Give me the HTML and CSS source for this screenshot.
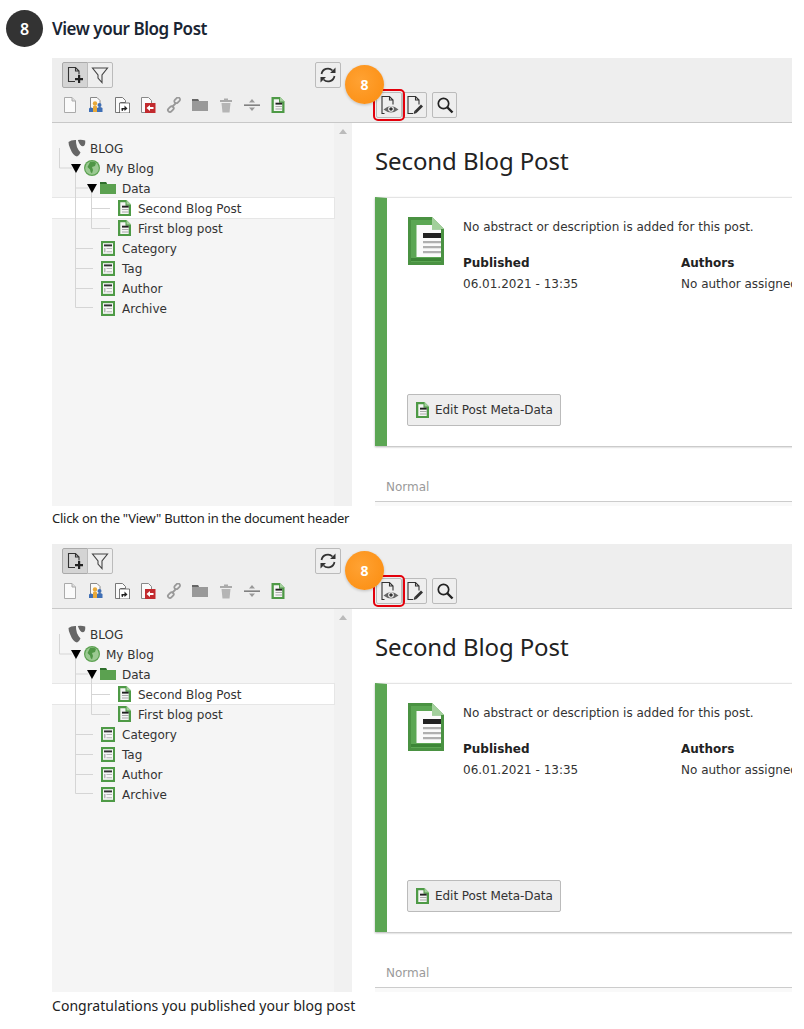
FILE: index.html
```html
<!DOCTYPE html>
<html lang="en">
<head>
<meta charset="utf-8">
<title>View your Blog Post</title>
<link rel="stylesheet" href="styles.css">
</head>
<body>
<svg class="defs" width="0" height="0" aria-hidden="true">
  <symbol id="i-new" viewBox="0 0 16 16"><path d="M2.500.5h7.500l3.500 3.500v11.500H2.500z" fill="#fafafa" stroke="#aaa"/><path d="M10 .5V4h3.500" fill="#ddd" stroke="#aaa"/></symbol>
  <symbol id="i-users" viewBox="0 0 16 16"><path d="M2.500.5h6.500l3 3v8H2.500z" fill="#fafafa" stroke="#888"/><path d="M1 15v-3.500q2-2 4 0V15z" fill="#3f6fb5"/><path d="M5 15V9.500q2-2 4 0V15z" fill="#e8a93a"/><path d="M9 15v-4q2.500-2 5.500 0v4z" fill="#3f6fb5"/><circle cx="7" cy="6.500" r="2.200" fill="#e8a93a"/><circle cx="11.500" cy="8" r="2" fill="#3f6fb5"/></symbol>
  <symbol id="i-move" viewBox="0 0 16 16"><path d="M1.500.5h7l3 3v2h-5v10h-5z" fill="#fafafa" stroke="#777"/><path d="M5.500 6h10v10h-10z" fill="#fff" stroke="#444" stroke-width=".7"/><path d="M7.500 13.500V11h3V8.500l3 3-3 2.500v-1.500H9v1.500z" fill="#222"/></symbol>
  <symbol id="i-del" viewBox="0 0 16 16"><path d="M1.500.5h7l3 3v12h-10z" fill="#fafafa" stroke="#888"/><path d="M5 6h10.500v10H5z" fill="#c22a2e"/><path d="M6.500 11l3.500-3v2h3.500v2H10v2z" fill="#fff"/></symbol>
  <symbol id="i-link" viewBox="0 0 16 16"><g fill="none" stroke="#999" stroke-width="1.800"><rect x="8" y="1.500" width="6.500" height="4" rx="2" transform="rotate(-45 11 3.500)"/><rect x="1.500" y="10" width="6.500" height="4" rx="2" transform="rotate(-45 5 12)"/><path d="M6 10l4-4"/></g></symbol>
  <symbol id="i-folder" viewBox="0 0 16 16"><path d="M0 2h6l1 2h9v10H0z" fill="#999"/><path d="M0 2h6l1 2H0z" fill="#666"/></symbol>
  <symbol id="i-trash" viewBox="0 0 16 16"><path d="M2 3h12v2H2zM6 1.500h4V3H6z" fill="#aaa"/><path d="M3.500 6h9l-1 9.500h-7z" fill="#b5b5b5"/></symbol>
  <symbol id="i-split" viewBox="0 0 16 16"><path d="M0 7.500h16v1.300H0z" fill="#666"/><path d="M8 2l3 3.500H5zM8 14l-3-3.500h6z" fill="#999"/></symbol>
  <symbol id="i-page" viewBox="0 0 13 16"><path d="M0 0h8.500L13 4.500V16H0z" fill="#4e9a46"/><path d="M8.500 0L13 4.500H8.500z" fill="#a3d09c"/><path d="M2.300 2.300h5.200v3.400h3.200V14H2.300z" fill="#f5f5f5"/><path d="M4 5.700h6.700v1.900H4z" fill="#222"/><path d="M4 9h6.700v1.100H4zM4 11.400h6.700v1.100H4z" fill="#aaa"/></symbol>
  <symbol id="i-table" viewBox="0 0 14 14" preserveAspectRatio="none"><path d="M0 0h14v14H0z" fill="#4e9a46"/><path d="M2 2h10v10H2z" fill="#f6f6f6"/><path d="M3 3.200h8v1.800H3z" fill="#333"/><path d="M3 6.500h1.500v4H3zM5.500 6.500H11v1H5.500zM5.500 9.500H11v1H5.500z" fill="#b5b5b5"/></symbol>
  <symbol id="i-new-plus" viewBox="0 0 18 18"><path d="M9 15.500H2.500v-14h7l3.500 3.500v3.500M9.500 1.500V5H13" fill="none" stroke="#333" stroke-width="1.100"/><path d="M12 9h2.200v3H17v2.200h-2.800V17H12v-2.800H9V12h3z" fill="#222"/></symbol>
  <symbol id="i-filter" viewBox="0 0 18 18"><path d="M1.500 2h15l-5.500 7v7.500L7 12V9z" fill="none" stroke="#444" stroke-width="1.100"/></symbol>
  <symbol id="i-refresh" viewBox="0 0 18 18"><path d="M2.500 8a6.500 6.500 0 0 1 11-3.500M15.500 10a6.500 6.500 0 0 1-11 3.500" fill="none" stroke="#333" stroke-width="1.700"/><path d="M16.500 1.500v5.500H11zM1.500 16.500V11H7z" fill="#333"/></symbol>
  <symbol id="i-view" viewBox="0 0 20 20"><path d="M5.500 18.500H3V1.500h7.500l3.500 3.500v4.500M10.500 1.500V5H14" fill="none" stroke="#333" stroke-width="1.100"/><path d="M4.500 14.500q7.500-7 15 0q-7.500 6-15 0z" fill="#666"/><circle cx="12" cy="14" r="2.800" fill="#fff"/><circle cx="12" cy="14" r="1.800" fill="#333"/></symbol>
  <symbol id="i-edit" viewBox="0 0 20 20"><path d="M8 18.500H3V1.500h7.500l3.500 3.500v4.500M10.500 1.500V5H14" fill="none" stroke="#333" stroke-width="1.100"/><path d="M10.500 17l6.500-6.500" fill="none" stroke="#333" stroke-width="2.800"/><path d="M8.500 19l1-3.200 2.200 2.200z" fill="#333"/></symbol>
  <symbol id="i-search" viewBox="0 0 18 18"><circle cx="7.500" cy="7.500" r="5.200" fill="none" stroke="#222" stroke-width="1.700"/><path d="M11 11l5.500 5.500" stroke="#222" stroke-width="2.400"/></symbol>
  <symbol id="i-typo3" viewBox="0 0 18 18"><path d="M.5 3Q3 .8 8 1q-.5 7 4.500 12.500Q11 17 9 17.500 5 17 2 9 .4 5 .5 3zM9.800.9q4-.6 7.400.6.500 5-2.200 5.800Q12 7 9.800.9z" fill="#666"/></symbol>
  <symbol id="i-globe" viewBox="0 0 16 16"><circle cx="8" cy="8" r="8" fill="#5ba150"/><circle cx="8" cy="8" r="6.800" fill="#9bc992"/><path d="M6 2q4-1 6 1l-1 3-3 1 1 3-1 3.500q-2-2-2-4L3.500 7z" fill="#4f9646"/></symbol>
  <symbol id="i-data" viewBox="0 0 16 14"><path d="M0 1h6l1 2h9v10H0z" fill="#5ba150"/><path d="M0 1h6l1 2H0z" fill="#2f6f2c"/></symbol>
  <symbol id="i-big" viewBox="0 0 36 48"><path d="M0 0h24l12 12v36H0z" fill="#4a9242"/><path d="M3 3h21v9h9v33H3z" fill="#5ba653"/><path d="M24 0l12 12H24z" fill="#a3d09c"/><path d="M8.500 8H24v4.500h9V40H8.500z" fill="#fbfbfb"/><path d="M15 16h18v5H15z" fill="#222"/><path d="M15 24h18v2.200H15zM15 29h18v2.200H15zM15 34h18v2.200H15z" fill="#b0b0b0"/><path d="M3 41h30v3H3z" fill="#3c8536"/></symbol>
</svg>

<main class="page">
  <h2 class="step"><span class="step-num">8</span><span>View your Blog Post</span></h2>

  <section class="shot">
    <div class="toolbar">
      <div class="tool-left">
        <div class="tool-top">
          <div class="btn-group">
            <span class="btn active"><svg class="ic18"><use href="#i-new-plus"/></svg></span>
            <span class="btn"><svg class="ic18"><use href="#i-filter"/></svg></span>
          </div>
          <span class="btn"><svg class="ic18"><use href="#i-refresh"/></svg></span>
        </div>
        <div class="tool-icons">
          <svg class="ic16"><use href="#i-new"/></svg><svg class="ic16"><use href="#i-users"/></svg><svg class="ic16"><use href="#i-move"/></svg><svg class="ic16"><use href="#i-del"/></svg><svg class="ic16"><use href="#i-link"/></svg><svg class="ic16"><use href="#i-folder"/></svg><svg class="ic16"><use href="#i-trash"/></svg><svg class="ic16"><use href="#i-split"/></svg><svg class="ic16"><use href="#i-page"/></svg>
        </div>
      </div>
      <div class="tool-right">
        <span class="btn hl"><svg class="ic20"><use href="#i-view"/></svg></span>
        <span class="btn"><svg class="ic20"><use href="#i-edit"/></svg></span>
        <span class="btn search"><svg class="ic18"><use href="#i-search"/></svg></span>
      </div>
      <span class="badge">8</span>
    </div>
    <div class="panes">
      <aside class="tree">
        <svg class="tree-lines" width="100" height="190" aria-hidden="true"><path d="M7.500 25v20H20M23.500 45v139.500M23.500 65H36M39.500 65v40.500M39.500 85.500H58M39.500 105.500H58M23.500 125.500H41M23.500 145.500H41M23.500 165.500H41M23.500 184.500H41" fill="none" stroke="#d5d5d5"/></svg>
        <div class="row lv0"><svg class="t-ic"><use href="#i-typo3"/></svg>BLOG</div>
        <div class="row lv1"><i class="caret"></i><svg class="t-ic"><use href="#i-globe"/></svg>My Blog</div>
        <div class="row lv2"><i class="caret"></i><svg class="t-ic"><use href="#i-data"/></svg>Data</div>
        <div class="row lv3 selected"><svg class="t-ic"><use href="#i-page"/></svg>Second Blog Post</div>
        <div class="row lv3"><svg class="t-ic"><use href="#i-page"/></svg>First blog post</div>
        <div class="row lv4"><svg class="t-ic"><use href="#i-table"/></svg>Category</div>
        <div class="row lv4"><svg class="t-ic"><use href="#i-table"/></svg>Tag</div>
        <div class="row lv4"><svg class="t-ic"><use href="#i-table"/></svg>Author</div>
        <div class="row lv4"><svg class="t-ic"><use href="#i-table"/></svg>Archive</div>
      </aside>
      <div class="scroll"><i class="scroll-up"></i></div>
      <div class="content">
        <h1 class="title">Second Blog Post</h1>
        <div class="card">
          <div class="card-top">
            <svg class="big"><use href="#i-big"/></svg>
            <div class="card-text">
              <p class="abstract">No abstract or description is added for this post.</p>
              <div class="meta">
                <div class="meta-col"><b>Published</b><span>06.01.2021 - 13:35</span></div>
                <div class="meta-col"><b>Authors</b><span>No author assigned</span></div>
              </div>
            </div>
          </div>
          <span class="edit"><svg class="ic-edit"><use href="#i-page"/></svg>Edit Post Meta-Data</span>
        </div>
        <div class="normal">Normal</div>
        <div class="foot"></div>
      </div>
    </div>
  </section>
  <p class="caption">Click on the "View" Button in the document header</p>

  <section class="shot">
    <div class="toolbar">
      <div class="tool-left">
        <div class="tool-top">
          <div class="btn-group">
            <span class="btn active"><svg class="ic18"><use href="#i-new-plus"/></svg></span>
            <span class="btn"><svg class="ic18"><use href="#i-filter"/></svg></span>
          </div>
          <span class="btn"><svg class="ic18"><use href="#i-refresh"/></svg></span>
        </div>
        <div class="tool-icons">
          <svg class="ic16"><use href="#i-new"/></svg><svg class="ic16"><use href="#i-users"/></svg><svg class="ic16"><use href="#i-move"/></svg><svg class="ic16"><use href="#i-del"/></svg><svg class="ic16"><use href="#i-link"/></svg><svg class="ic16"><use href="#i-folder"/></svg><svg class="ic16"><use href="#i-trash"/></svg><svg class="ic16"><use href="#i-split"/></svg><svg class="ic16"><use href="#i-page"/></svg>
        </div>
      </div>
      <div class="tool-right">
        <span class="btn hl"><svg class="ic20"><use href="#i-view"/></svg></span>
        <span class="btn"><svg class="ic20"><use href="#i-edit"/></svg></span>
        <span class="btn search"><svg class="ic18"><use href="#i-search"/></svg></span>
      </div>
      <span class="badge">8</span>
    </div>
    <div class="panes">
      <aside class="tree">
        <svg class="tree-lines" width="100" height="190" aria-hidden="true"><path d="M7.500 25v20H20M23.500 45v139.500M23.500 65H36M39.500 65v40.500M39.500 85.500H58M39.500 105.500H58M23.500 125.500H41M23.500 145.500H41M23.500 165.500H41M23.500 184.500H41" fill="none" stroke="#d5d5d5"/></svg>
        <div class="row lv0"><svg class="t-ic"><use href="#i-typo3"/></svg>BLOG</div>
        <div class="row lv1"><i class="caret"></i><svg class="t-ic"><use href="#i-globe"/></svg>My Blog</div>
        <div class="row lv2"><i class="caret"></i><svg class="t-ic"><use href="#i-data"/></svg>Data</div>
        <div class="row lv3 selected"><svg class="t-ic"><use href="#i-page"/></svg>Second Blog Post</div>
        <div class="row lv3"><svg class="t-ic"><use href="#i-page"/></svg>First blog post</div>
        <div class="row lv4"><svg class="t-ic"><use href="#i-table"/></svg>Category</div>
        <div class="row lv4"><svg class="t-ic"><use href="#i-table"/></svg>Tag</div>
        <div class="row lv4"><svg class="t-ic"><use href="#i-table"/></svg>Author</div>
        <div class="row lv4"><svg class="t-ic"><use href="#i-table"/></svg>Archive</div>
      </aside>
      <div class="scroll"><i class="scroll-up"></i></div>
      <div class="content">
        <h1 class="title">Second Blog Post</h1>
        <div class="card">
          <div class="card-top">
            <svg class="big"><use href="#i-big"/></svg>
            <div class="card-text">
              <p class="abstract">No abstract or description is added for this post.</p>
              <div class="meta">
                <div class="meta-col"><b>Published</b><span>06.01.2021 - 13:35</span></div>
                <div class="meta-col"><b>Authors</b><span>No author assigned</span></div>
              </div>
            </div>
          </div>
          <span class="edit"><svg class="ic-edit"><use href="#i-page"/></svg>Edit Post Meta-Data</span>
        </div>
        <div class="normal">Normal</div>
        <div class="foot"></div>
      </div>
    </div>
  </section>
  <p class="caption big-caption">Congratulations you published your blog post</p>
</main>
</body>
</html>
```
FILE: styles.css
```css
* { box-sizing: border-box; }
html, body { margin: 0; padding: 0; background: #fff; }
body { font-family: "Noto Sans", "Open Sans", sans-serif; color: #212529; overflow: hidden; }
.defs { position: absolute; }
.page { width: 792px; padding: 10px 0 0 6px; }

.step { display: flex; align-items: center; gap: 9px; margin: 0 0 11px; height: 37px; font-size: 17px; font-weight: 600; color: #1a2533; letter-spacing: -0.47px; }
.step-num { width: 37px; height: 37px; border-radius: 50%; background: #333; color: #fff; display: flex; align-items: center; justify-content: center; font-size: 16px; letter-spacing: 0; }

.shot { margin-left: 46px; width: 740px; height: 448px; overflow: hidden; position: relative; font-family: "DejaVu Sans", Verdana, sans-serif; font-size: 12px; color: #333; }
.toolbar { height: 65px; background: #eee; border-bottom: 1px solid #c8c8c8; display: flex; position: relative; }
.tool-left { width: 289px; padding: 4px 0 0 10px; }
.tool-top { display: flex; justify-content: space-between; }
.btn-group { display: flex; }
.btn { width: 26px; height: 26px; background: #eee; border: 1px solid #bbb; border-radius: 2px; display: flex; align-items: center; justify-content: center; }
.btn.active { background: #d4d4d4; border-color: #aaa; border-radius: 2px 0 0 2px; }
.btn-group .btn + .btn { margin-left: -1px; border-radius: 0 2px 2px 0; }
.ic18 { width: 18px; height: 18px; display: block; }
.ic20 { width: 20px; height: 20px; display: block; }
.ic16 { width: 16px; height: 16px; display: block; flex: none; }
.ic-edit { width: 13px; height: 16px; display: block; flex: none; }
.tool-icons { display: flex; gap: 10px; margin: 9px 0 0 0; }
.tool-right { display: flex; margin-left: 35px; padding-top: 34px; }
.tool-right .btn { width: 25px; }
.tool-right .btn.hl { width: 26px; outline: 2px solid #e3000b; outline-offset: 1px; border-radius: 2px; position: relative; z-index: 1; }
.tool-right .btn.search { margin-left: 5px; width: 25px; }
.badge { position: absolute; left: 293px; top: 7px; width: 39px; height: 39px; border-radius: 50%; background: radial-gradient(circle at 40% 40%, #ffa233, #fb8c0e); color: #fff; font-family: "Noto Sans", sans-serif; font-weight: 700; font-size: 14px; display: flex; align-items: center; justify-content: center; box-shadow: 0 1px 3px rgba(0,0,0,.2); z-index: 2; }

.panes { display: flex; height: 383px; }
.tree { width: 282px; background: #f5f5f5; padding-top: 15px; position: relative; }
.tree-lines { position: absolute; left: 0; top: 0; z-index: 1; }
.row { height: 20px; display: flex; align-items: center; position: relative; white-space: nowrap; padding-top: 2px; }
.t-ic { width: 16px; height: 16px; margin: -2px 6px 0 0; flex: none; position: relative; z-index: 2; }
.lv0 { padding-left: 16px; }
.lv0 .t-ic { width: 18px; height: 18px; margin-right: 4px; }
.lv1 { padding-left: 32px; }
.lv2 { padding-left: 48px; }
.lv3 { padding-left: 66px; }
.lv3 .t-ic { width: 13px; margin-right: 7px; }
.lv4 { padding-left: 49px; }
.lv4 .t-ic { width: 14px; height: 15px; margin-right: 7px; }
.selected { background: #fff; box-shadow: 0 0 0 1px #e6e6e6; }
.caret { width: 0; height: 0; border-left: 5px solid transparent; border-right: 5px solid transparent; border-top: 9px solid #000; flex: none; margin: -2px 3px 0 -13px; position: relative; z-index: 2; }
.scroll { width: 18px; background: #f1f1f1; display: flex; justify-content: center; padding-top: 6px; }
.scroll-up { width: 0; height: 0; border-left: 4px solid transparent; border-right: 4px solid transparent; border-bottom: 5px solid #bbb; }
.content { flex: 1; background: #fff; padding-left: 23px; min-width: 0; }
.title { font-family: "Noto Sans", sans-serif; font-weight: 400; font-size: 24px; line-height: 32px; margin: 22px 0 20px; color: #222; letter-spacing: -0.1px; }
.card { height: 249px; border-left: 12px solid #5ba653; box-shadow: 0 1px 2px rgba(0,0,0,.3); border-top: 1px solid #e4e4e4; margin-right: -60px; padding: 19px 0 0 21px; position: relative; }
.card-top { display: flex; }
.big { width: 36px; height: 48px; margin-right: 19px; flex: none; }
.abstract { margin: 0 0 18px; line-height: 20px; white-space: nowrap; }
.meta { display: flex; }
.meta-col { width: 218px; display: flex; flex-direction: column; gap: 5px; line-height: 16px; white-space: nowrap; }
.meta-col b { font-weight: 700; color: #222; }
.edit { position: absolute; left: 20px; top: 196px; height: 32px; width: 154px; background: #eee; border: 1px solid #bbb; border-radius: 2px; display: flex; align-items: center; gap: 6px; padding-left: 8px; white-space: nowrap; letter-spacing: -0.05px; }
.normal { margin-top: 31px; padding: 0 0 4px 11px; margin-right: -60px; color: #9a9a9a; border-bottom: 1px solid #ccc; line-height: 20px; font-size: 12px; }
.foot { height: 5px; background: #f9f9f9; margin-right: -60px; }

.caption { margin: 3px 0 17px 46px; font-size: 13px; line-height: 18px; color: #222; letter-spacing: -0.26px; }
.big-caption { font-size: 14px; letter-spacing: 0.05px; margin-top: 5px; }
```
